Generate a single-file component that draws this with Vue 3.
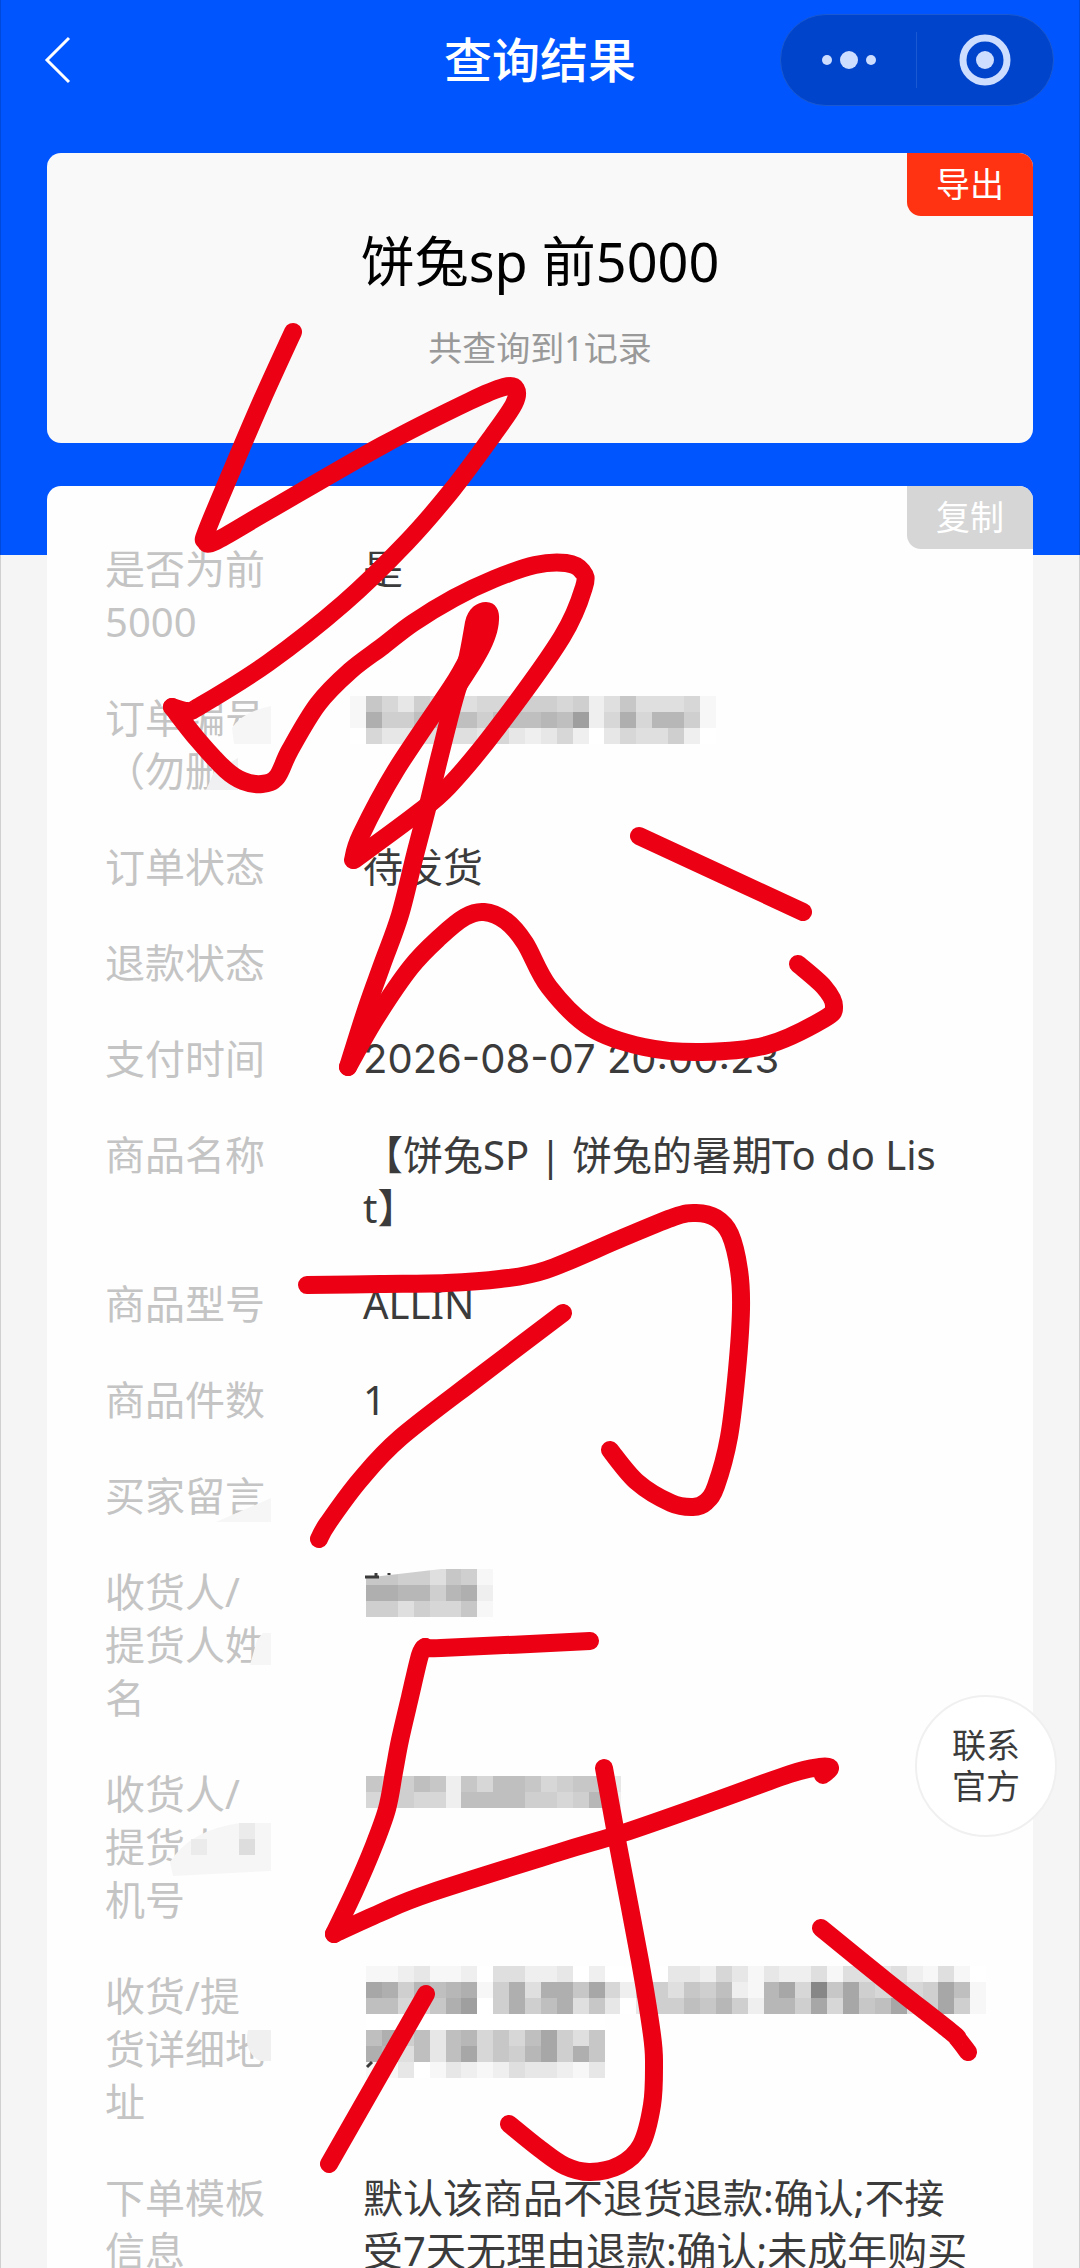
<template>
  <div class="page">
    <header class="navBar">
      <button class="backButton" aria-label="返回">
        <svg width="30" height="50" viewBox="0 0 30 50">
          <path d="M26 3 L4 25 L26 47" fill="none" stroke="#fff" stroke-width="3" />
        </svg>
      </button>
      <h1 class="navTitle">查询结果</h1>
      <div class="capsule">
        <button class="capsuleButton" aria-label="更多">
          <svg width="60" height="60" viewBox="0 0 60 60" fill="#ccddff">
            <circle cx="8" cy="30" r="5" />
            <circle cx="30" cy="30" r="9" />
            <circle cx="52" cy="30" r="5" />
          </svg>
        </button>
        <span class="capsuleLine"></span>
        <button class="capsuleButton" aria-label="关闭">
          <svg width="60" height="60" viewBox="0 0 60 60">
            <circle cx="30" cy="30" r="22" fill="none" stroke="#ccddff" stroke-width="7" />
            <circle cx="30" cy="30" r="9" fill="#ccddff" />
          </svg>
        </button>
      </div>
    </header>

    <section class="card summary">
      <button class="cornerButton export">导出</button>
      <h2 class="summaryTitle">饼兔sp 前5000</h2>
      <p class="summaryCount">共查询到1记录</p>
    </section>

    <section class="card record">
      <button class="cornerButton copy">复制</button>
      <dl class="fields">
        <div class="field" v-for="(field, i) in fields" :key="i">
          <dt class="fieldLabel">{{ field.label }}</dt>
          <dd class="fieldValue" :class="{ time: field.time }">{{ field.value }}</dd>
        </div>
      </dl>
    </section>

    <button class="contactButton">联系<br />官方</button>

    <svg class="markup" viewBox="0 0 1080 2268" aria-hidden="true">
      <g shape-rendering="crispEdges">
        <rect
          v-for="(tile, i) in tiles"
          :key="i"
          :x="tile.x"
          :y="tile.y"
          width="16"
          height="16"
          :fill="tile.fill"
        />
      </g>
      <g fill="#f6f6f6">
        <path d="M364 1568 H450 L364 1578 Z" fill="#fefefe" />
        <path d="M232 728 Q242 712 271 706 V744 H234 Z" />
        <path d="M206 790 L214 772 L238 758 V790 Z" fill="#f0f0f2" />
        <path d="M216 1522 L271 1498 V1522 Z" />
        <path d="M257 1640 L263 1633 H271 V1665 H250 Z" />
        <path d="M173 1876 L170 1862 Q190 1830 240 1823 H271 V1871 Z" />
        <path d="M191 1839 H207 V1855 H191 Z M239 1823 H255 V1839 H239 Z" fill="#ebebeb" />
        <path d="M239 1839 H255 V1855 H239 Z" fill="#dddddd" />
        <path d="M248 2030 H271 V2061 H260 Q243 2052 248 2030 Z" fill="#f0f0f0" />
      </g>
      <path d="M365 1577 H379 M376 1573 V1577 M389 1573 V1575 M367 2067 L372 2062" stroke="#3b3b3b" stroke-width="3" />
      <g class="ink">
        <path v-for="(stroke, i) in strokes" :key="i" :d="smooth(stroke)" />
        <path class="inkBlob" d="M465 622 C468 608 477 602 486 602 C496 602 500 611 499 620 C498 642 483 664 466 690 L449 690 C458 665 461 645 465 622 Z" />
      </g>
    </svg>
  </div>
</template>
<script setup>
const fields = [
  { label: "是否为前\n5000", value: "是" },
  { label: "订单编号\n（勿删", value: "" },
  { label: "订单状态", value: "待发货" },
  { label: "退款状态", value: "" },
  { label: "支付时间", value: "2026-08-07 20:00:23", time: true },
  { label: "商品名称", value: "【饼兔SP | 饼兔的暑期To do Lis\nt】" },
  { label: "商品型号", value: "ALLIN" },
  { label: "商品件数", value: "1" },
  { label: "买家留言", value: "" },
  { label: "收货人/\n提货人姓\n名", value: "" },
  { label: "收货人/\n提货人手\n机号", value: "" },
  { label: "收货/提\n货详细地\n址", value: "" },
  {
    label: "下单模板\n信息",
    value: "默认该商品不退货退款:确认;不接\n受7天无理由退款:确认;未成年购买",
  },
];

// each digit is how dark a tile is, 0 = white, f = darkest
const mosaics = [
  {
    x: 350,
    y: 696,
    rows: ["17536554556665624744451", "1a668888688898c25a59961", "05334444353235203544620"],
  },
  { x: 366, y: 1569, rows: ["77664761", "aa9969a2", "66465571"] },
  { x: 366, y: 1776, rows: ["7668727588756773", "5565528888665692"] },
  {
    x: 366,
    y: 1966,
    rows: [
      "112311204422302000033253132241443421410",
      "ba6989a16a4aa7b52664768219b5f7b65656b81",
      "88557ac06a68a473036687962996b5b78b46b61",
      "000000000000000",
      "8a683895758b647",
      "a94838b5769b6a7",
      "113013212433213",
    ],
  },
];

const tiles = mosaics.flatMap((mosaic) =>
  mosaic.rows.flatMap((row, r) =>
    [...row].map((level, c) => {
      const grey = 255 - parseInt(level, 16) * 8;
      return {
        x: Math.round(mosaic.x + c * 15.9),
        y: mosaic.y + r * 16,
        fill: `rgb(${grey}, ${grey}, ${grey})`,
      };
    })
  )
);

const strokes = [
  [[293, 332], [262, 400], [232, 470], [207, 530], [205, 541], [216, 541], [268, 511], [383, 445], [470, 401], [504, 387], [516, 389], [514, 404], [493, 435], [452, 490], [406, 543], [344, 603], [268, 663], [200, 706], [187, 711], [172, 707]],
  [[172, 707], [198, 740], [226, 770], [243, 781], [262, 784], [277, 777], [290, 750], [318, 704], [350, 671], [383, 646], [413, 623], [454, 598], [494, 579], [535, 565], [566, 563], [582, 571], [584, 587], [562, 637], [498, 727], [449, 786], [415, 815], [354, 860]],
  [[353, 860], [361, 835], [396, 770], [456, 680], [474, 645]],
  [[474, 645], [457, 690], [440, 755], [428, 805], [415, 855], [400, 915], [382, 965], [366, 1010], [348, 1067]],
  [[348, 1067], [376, 1018], [411, 967], [440, 937], [465, 917], [484, 912], [506, 921], [525, 943], [549, 987], [591, 1028], [644, 1047], [702, 1052], [767, 1045], [824, 1019], [834, 1006], [824, 987], [798, 964]],
  [[639, 836], [803, 912]],
  [[307, 1285], [380, 1284], [446, 1283], [500, 1279], [546, 1270], [620, 1239], [674, 1217], [696, 1213], [716, 1218], [730, 1234], [739, 1270], [741, 1309], [737, 1370], [729, 1437], [716, 1486], [706, 1502], [693, 1507], [671, 1503], [637, 1482], [610, 1450]],
  [[563, 1313], [480, 1376], [400, 1438], [360, 1480], [328, 1523], [319, 1539]],
  [[590, 1641], [441, 1648], [425, 1647]],
  [[425, 1647], [420, 1655], [410, 1697], [400, 1740], [394, 1772], [387, 1809], [373, 1848], [355, 1890], [334, 1934]],
  [[334, 1934], [380, 1913], [430, 1893], [560, 1852], [623, 1833], [712, 1802], [790, 1774], [820, 1767], [830, 1768], [823, 1775]],
  [[604, 1768], [618, 1845], [640, 1961], [652, 2035], [654, 2065], [652, 2105], [641, 2145], [620, 2165], [590, 2172], [565, 2166], [540, 2149], [509, 2124]],
  [[426, 1994], [329, 2164]],
  [[821, 1928], [885, 1980], [950, 2031], [958, 2039], [968, 2052]],
];

function smooth(points) {
  let d = `M${points[0]}`;
  for (let i = 0; i < points.length - 1; i++) {
    const before = points[i - 1] || points[i];
    const from = points[i];
    const to = points[i + 1];
    const after = points[i + 2] || to;
    const c1 = [from[0] + (to[0] - before[0]) / 6, from[1] + (to[1] - before[1]) / 6];
    const c2 = [to[0] - (after[0] - from[0]) / 6, to[1] - (after[1] - from[1]) / 6];
    d += ` C${c1} ${c2} ${to}`;
  }
  return d;
}
</script>
<style>
body {
  background-color: #f5f5f5;
}
</style>
<style scoped>
.page {
  position: relative;
  height: 100vh;
  overflow: hidden;
  box-sizing: border-box;
  padding: 0 47px;
  background:
    linear-gradient(
      to right,
      rgba(0, 0, 0, 0.15) 1px,
      transparent 1px,
      transparent calc(100% - 1px),
      rgba(0, 0, 0, 0.15) calc(100% - 1px)
    ),
    linear-gradient(#0055ff 555px, #f5f5f5 555px);
  font-family: "Noto Sans", "Noto Sans CJK SC", sans-serif;
}

button {
  border: none;
  padding: 0;
  font-family: inherit;
  cursor: pointer;
}

.navBar {
  height: 120px;
  margin: 0 -21px 33px;
  display: flex;
  align-items: center;
  justify-content: space-between;
}

.backButton {
  width: 274px;
  height: 60px;
  padding-left: 17px;
  display: flex;
  align-items: center;
  background: none;
}

.navTitle {
  margin: 0;
  font-size: 48px;
  line-height: 64px;
  font-weight: 500;
  color: white;
}

.capsule {
  width: 274px;
  height: 92px;
  box-sizing: border-box;
  border: 1px solid #1a59d1;
  border-radius: 46px;
  display: flex;
  align-items: center;
  background-color: #0044cc;
}

.capsuleButton {
  flex: 1;
  height: 100%;
  display: flex;
  justify-content: center;
  align-items: center;
  background: none;
}

.capsuleLine {
  width: 1px;
  height: 56px;
  background-color: #1a59d1;
}

.card {
  position: relative;
  border-radius: 14px;
}

.summary {
  height: 290px;
  box-sizing: border-box;
  padding-top: 73px;
  margin-bottom: 43px;
  text-align: center;
  background-color: #f9f9f9;
}

.summaryTitle {
  margin: 0 0 28px;
  font-size: 54px;
  line-height: 70px;
  font-weight: 400;
  color: black;
}

.summaryCount {
  margin: 0;
  font-size: 34px;
  line-height: 48px;
  color: #999999;
}

.cornerButton {
  position: absolute;
  top: 0;
  right: 0;
  width: 126px;
  height: 63px;
  border-radius: 0 14px;
  font-size: 34px;
  line-height: 63px;
  color: white;
}

.export {
  background-color: #ff3311;
}

.copy {
  background-color: #d6d6d6;
}

.record {
  padding: 56px 58px 43px;
  background-color: #fefefe;
}

.fields {
  margin: 0;
  display: flex;
  flex-direction: column;
  gap: 43px;
}

.field {
  display: flex;
  font-size: 40px;
  line-height: 53px;
  white-space: pre;
}

.fieldLabel {
  flex: none;
  width: 258px;
  color: #c4c4c4;
}

.fieldValue {
  margin: 0;
  color: #3b3b3b;
}

.time {
  font-family: Inter, "Noto Sans CJK SC", sans-serif;
}

.contactButton {
  position: absolute;
  right: 23px;
  bottom: 431px;
  width: 142px;
  height: 142px;
  border: 2px solid #f0f0f0;
  border-radius: 50%;
  font-size: 34px;
  line-height: 41px;
  color: #3b3b3b;
  background-color: white;
}

.markup {
  position: absolute;
  top: 0;
  left: 0;
  width: 100%;
  pointer-events: none;
}

.ink {
  fill: none;
  stroke: #ec0014;
  stroke-width: 18px;
  stroke-linecap: round;
  stroke-linejoin: round;
}

.inkBlob {
  fill: #ec0014;
  stroke: none;
}
</style>
